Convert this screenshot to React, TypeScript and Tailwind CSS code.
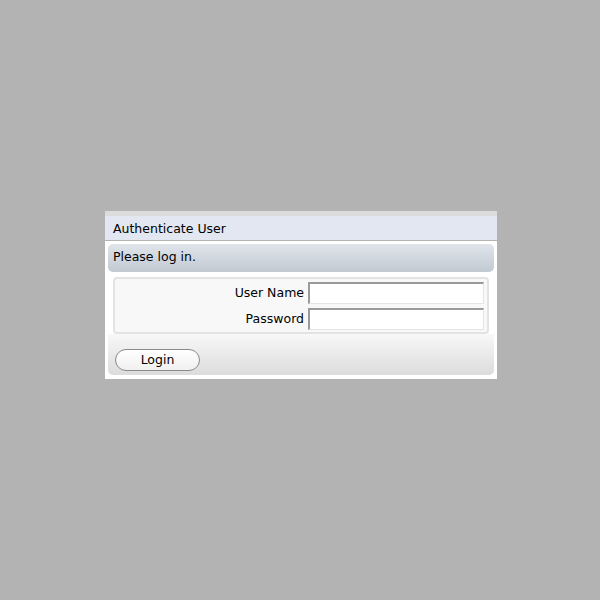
import React from 'react';

const font = { fontFamily: '"DejaVu Sans", "Liberation Sans", sans-serif' };

const Field: React.FC<{ label: string; type?: string }> = ({ label, type = 'text' }) => (
  <div className="flex items-center justify-end">
    <label className="text-[12.5px] text-black mr-[4px]">{label}</label>
    <input
      type={type}
      className="w-[176px] h-[22px] bg-white border-t-2 border-l-2 border-r border-b border-t-[#9a9a9a] border-l-[#9a9a9a] border-r-[#e4e4e4] border-b-[#e4e4e4] outline-none"
    />
  </div>
);

export default function App() {
  return (
    <div className="w-full h-[600px] bg-[#b3b3b3] pt-[211px] pl-[105px]" style={font}>
      <div className="w-[392px] flex flex-col">
        {/* barra do topo */}
        <div className="h-[5px] bg-[#dcdcdc]" />
        <div className="h-[25px] bg-[#e3e7f1] border-b border-[#b3b3b3] flex items-center px-[8px] pt-[2px] text-[12.5px] text-black">
          Authenticate User
        </div>

        <div className="bg-white p-[3px] pb-[4px]">
          <div className="h-[28px] rounded-[5px] bg-gradient-to-b from-[#e0e5eb] to-[#c1c9d2] flex items-center px-[5px] pb-[1px] text-[12.5px] text-black">
            Please log in.
          </div>

          <div className="pt-[5px] px-[5px] bg-white">
            <div className="h-[57px] rounded-[4px] border-2 border-[#e3e3e3] bg-[#f8f8f8] pt-[3px] pr-[3px] flex flex-col gap-[4px]">
              <Field label="User Name" />
              <Field label="Password" type="password" />
            </div>
          </div>

          <div className="h-[41px] rounded-b-[5px] bg-gradient-to-b from-[#f8f8f8] to-[#dcdcdc] pt-[13px] pl-[7px]">
            <button className="w-[85px] h-[22px] rounded-full border border-[#8a8a8a] bg-gradient-to-b from-white to-[#f0f0f0] text-[12.5px] text-black">
              Login
            </button>
          </div>
        </div>
      </div>
    </div>
  );
}
